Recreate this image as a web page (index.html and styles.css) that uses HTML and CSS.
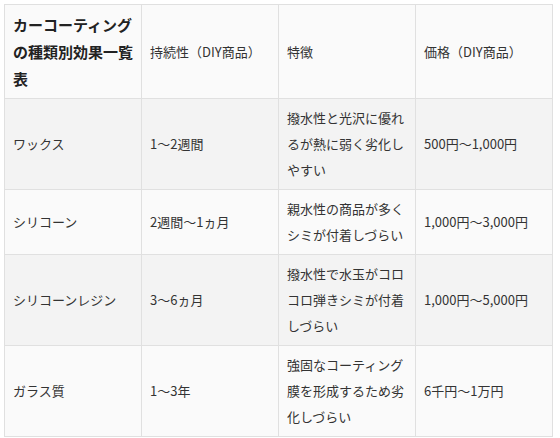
FILE: index.html
```html
<!DOCTYPE html>
<html lang="ja">
<head>
<meta charset="utf-8">
<link rel="stylesheet" href="styles.css">
</head>
<body>
<table class="cmp">
  <thead>
    <tr>
      <th class="title">カーコーティングの種類別効果一覧表</th>
      <th>持続性（DIY商品）</th>
      <th>特徴</th>
      <th>価格（DIY商品）</th>
    </tr>
  </thead>
  <tbody>
    <tr class="odd">
      <td>ワックス</td>
      <td>1～2週間</td>
      <td>撥水性と光沢に優れるが熱に弱く劣化しやすい</td>
      <td>500円～1,000円</td>
    </tr>
    <tr class="even">
      <td>シリコーン</td>
      <td>2週間～1ヵ月</td>
      <td>親水性の商品が多くシミが付着しづらい</td>
      <td>1,000円～3,000円</td>
    </tr>
    <tr class="odd">
      <td>シリコーンレジン</td>
      <td>3～6ヵ月</td>
      <td>撥水性で水玉がコロコロ弾きシミが付着しづらい</td>
      <td>1,000円～5,000円</td>
    </tr>
    <tr class="even">
      <td>ガラス質</td>
      <td>1～3年</td>
      <td>強固なコーティング膜を形成するため劣化しづらい</td>
      <td>6千円～1万円</td>
    </tr>
  </tbody>
</table>
</body>
</html>
```
FILE: styles.css
```css
html, body {
  margin: 0;
  background: #ffffff;
}
body {
  padding: 4px;
  font-family: "Noto Sans CJK JP", "Noto Sans", sans-serif;
  color: #333333;
}
.cmp {
  border-collapse: collapse;
  table-layout: fixed;
  width: 549px;
}
.cmp th,
.cmp td {
  border: 1px solid #e0e0e0;
  padding: 6px 8px;
  text-align: left;
  vertical-align: middle;
  font-size: 13px;
  line-height: 26px;
  font-weight: normal;
  word-break: break-all;
}
.cmp thead th {
  background: #fafafa;
}
.cmp th.title {
  font-size: 15px;
  line-height: 27px;
  font-weight: bold;
  color: #222222;
}
.cmp tr.odd td {
  background: #f3f3f3;
}
.cmp tr.even td {
  background: #fafafa;
}
```
